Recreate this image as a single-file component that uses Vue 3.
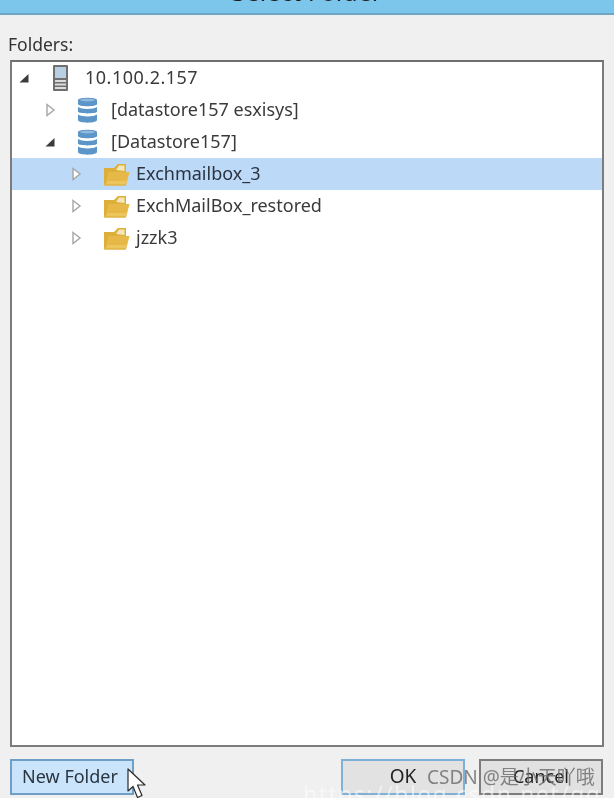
<script setup>
const rows = [
  { level: 0, open: true, icon: 'server', label: '10.100.2.157' },
  { level: 1, open: false, icon: 'db', label: '[datastore157 esxisys]' },
  { level: 1, open: true, icon: 'db', label: '[Datastore157]' },
  { level: 2, open: false, icon: 'folder', label: 'Exchmailbox_3', selected: true },
  { level: 2, open: false, icon: 'folder', label: 'ExchMailBox_restored' },
  { level: 2, open: false, icon: 'folder', label: 'jzzk3' },
]
</script>

<template>
  <div class="dialog">
    <header class="titlebar"><span>Select Folder</span></header>
    <main class="body">
      <div class="caption">Folders:</div>
      <div class="tree">
        <div
          v-for="row in rows"
          :key="row.label"
          class="row"
          :class="['level-' + row.level, { selected: row.selected }]"
        >
          <svg class="arrow" width="12" height="14" viewBox="0 0 12 14">
            <path v-if="row.open" d="M1.5 11.5 L10.5 11.5 L10.5 3 Z" fill="#3c3c3c" />
            <path v-else d="M3 1.5 L10 7 L3 12.5 Z" fill="#fff" stroke="#a6a6a6" stroke-width="1.4" />
          </svg>
          <span class="icon-box">
            <svg v-if="row.icon === 'server'" class="server" width="15" height="26" viewBox="0 0 15 26">
              <rect x="0" y="0" width="15" height="26" rx="1" fill="#6f6f6f" />
              <rect x="2" y="2" width="11" height="11" fill="#b7cee3" />
              <rect x="2" y="15" width="11" height="2" fill="#dcdcdc" />
              <rect x="2" y="18.5" width="11" height="2" fill="#dcdcdc" />
              <rect x="2" y="22" width="11" height="2" fill="#dcdcdc" />
            </svg>
            <svg v-else-if="row.icon === 'db'" class="db" width="19" height="26" viewBox="0 0 19 26">
              <path d="M0 3 C0 0 19 0 19 3 L19 7 C19 10 0 10 0 7 Z" fill="#5c95c8" />
              <ellipse cx="9.5" cy="3" rx="7.5" ry="1.5" fill="#8fb9dd" />
              <path d="M0 10 C3 12.5 16 12.5 19 10 L19 14.5 C19 17 0 17 0 14.5 Z" fill="#5c95c8" />
              <path d="M0 17.5 C3 20 16 20 19 17.5 L19 23 C19 26.5 0 26.5 0 23 Z" fill="#5c95c8" />
            </svg>
            <svg v-else class="folder" width="27" height="23" viewBox="0 0 27 23">
              <path d="M1 5 L1 22.5 L23 22.5 L23 1 L15 1 L11 5 Z" fill="#dcae3a" />
              <path d="M13 7 L16 2.5 L21.5 2.5 L21.5 8 Z" fill="#f3e6b8" />
              <path d="M2 22.5 L5.5 9 L26.5 9 L23 22.5 Z" fill="#e6b847" />
              <path d="M3.5 21 L4.5 18 L24 18 L23 21 Z" fill="#ecc55c" />
            </svg>
          </span>
          <span class="label">{{ row.label }}</span>
        </div>
      </div>
      <footer class="actions">
        <button class="btn hover">New Folder</button>
        <div class="right">
          <button class="btn focus">OK</button>
          <button class="btn cancel">Cancel</button>
        </div>
      </footer>
    </main>
    <svg class="cursor" width="20" height="31" viewBox="0 0 20 31">
      <path d="M1 1 L1 23 L6 18.5 L10.5 29.5 L15 27.5 L10.5 17 L18 17 Z" fill="#fff" stroke="#2a2a2a" stroke-width="1.2" stroke-linejoin="round" />
    </svg>
    <div class="wm-name">CSDN @是小天吖哦</div>
    <div class="wm-url">https://blog.csdn.net/qq_38492026</div>
  </div>
</template>

<style>
html, body { margin: 0; padding: 0; background: #f0f0f0; }
</style>

<style scoped>
.dialog {
  position: relative;
  width: 614px;
  height: 798px;
  overflow: hidden;
  background: #f0f0f0;
  font-family: "Noto Sans", "Open Sans", sans-serif;
  color: #2b2b2b;
  filter: blur(0.4px);
}
.titlebar {
  height: 15px;
  box-sizing: border-box;
  background: #7cc6ec;
  border-bottom: 2px solid #6ea6c4;
  overflow: hidden;
  display: flex;
  justify-content: center;
  align-items: flex-end;
  padding-bottom: 7px;
  font-size: 25px;
  line-height: 30px;
  color: #1c1c1c;
}
.titlebar span { display: block; flex: none; }
.body {
  padding: 17px 10px 0;
}
.caption {
  margin-left: -2px;
  font-size: 17.5px;
  line-height: 24px;
  height: 28px;
  color: #333;
}
.tree {
  width: 594px;
  height: 687px;
  box-sizing: border-box;
  background: #fff;
  border: 2px solid #7c7c7c;
  border-top-color: #6f6f6f;
}
.row {
  height: 32px;
  display: flex;
  align-items: center;
  font-size: 18px;
  color: #3a3a3a;
}
.row.level-0 { padding-left: 6px; }
.row.level-1 { padding-left: 32px; }
.row.level-2 { padding-left: 58px; }
.row.selected { background: #bcd9f7; color: #2c3340; }
.arrow { flex: none; }
.icon-box {
  flex: none;
  width: 55px;
  display: flex;
  align-items: center;
}
.server { margin-left: 23px; }
.db { margin-left: 22px; }
.folder { margin-left: 21px; }
.label { white-space: nowrap; margin-bottom: 3px; }
.level-0 .label { letter-spacing: 0.5px; }
.level-2 .label { margin-left: -1px; }
.actions {
  margin-top: 12px;
  display: flex;
  justify-content: space-between;
  width: 593px;
}
.right { display: flex; gap: 14px; }
.btn {
  width: 124px;
  height: 36px;
  box-sizing: border-box;
  font: inherit;
  font-size: 18px;
  color: #2b3540;
  background: #e1e1e1;
  border: 2px solid #7a7a7a;
  padding: 0 0 2px;
}
.btn.hover { background: #c9e4fb; border-color: #6f9fc6; padding-right: 4px; }
.btn.focus { border-color: #7fb0d6; background: #e2e2e2; color: #222; font-size: 19px; }
.btn.cancel { border-color: #7d7d7d; color: #222; }
.cursor {
  position: absolute;
  left: 127px;
  top: 768px;
}
.wm-name {
  position: absolute;
  left: 427px;
  top: 765px;
  font-size: 19px;
  line-height: 24px;
  color: rgba(105, 105, 105, 0.8);
  font-family: "Noto Sans", "Noto Sans CJK SC", sans-serif;
  white-space: nowrap;
}
.wm-url {
  position: absolute;
  left: 303px;
  top: 779px;
  font-size: 23px;
  line-height: 30px;
  letter-spacing: 1.5px;
  color: rgba(255, 255, 255, 0.55);
  white-space: nowrap;
}
</style>
